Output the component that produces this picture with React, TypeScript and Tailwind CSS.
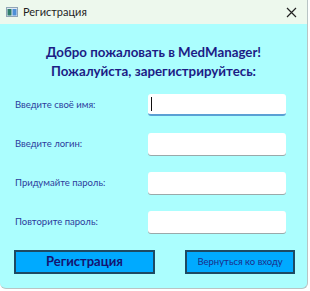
const fields = ["Введите своё имя:", "Введите логин:", "Придумайте пароль:", "Повторите пароль:"]

const App = () => {
  return (
    <div className="h-[291px] w-[310px] bg-white font-['Lato','Noto_Sans',sans-serif]">
      <div className="flex h-[289px] w-[308px] flex-col overflow-hidden rounded-b-md border-r border-b border-[#b9c4c4] bg-[#abfefe]">
        <div className="flex h-[24px] shrink-0 items-center bg-[#edf8ed] pl-[6px] pr-[8px]">
          <svg width="12" height="10" viewBox="0 0 12 10" className="mr-[5px]">
            <rect x="0.5" y="0.5" width="11" height="9" fill="#dfe9f2" stroke="#8fa4b5" />
            <rect x="1.5" y="2" width="4" height="6.5" fill="#2f7d6b" />
            <rect x="6.5" y="2" width="4" height="6.5" fill="#4f8fd6" />
          </svg>
          <span className="text-[11px] text-[#1f1f1f]">Регистрация</span>
          <svg width="11" height="11" viewBox="0 0 11 11" className="ml-auto mr-[2px]">
            <path d="M1 1 L10 10 M10 1 L1 10" stroke="#222" strokeWidth="1.2" />
          </svg>
        </div>
        <div className="mt-[19px] text-center text-[13.3px] font-bold leading-[19px] text-[#1c1c85]">
          <div>Добро пожаловать в MedManager!</div>
          <div>Пожалуйста, зарегистрируйтесь:</div>
        </div>
        <div className="mt-[13px] flex flex-col gap-[17px] pl-[15px]">
          {fields.map((f, i) => (
            <div key={f} className="flex h-[22px] items-center">
              <span className="w-[133px] text-[9.5px] text-[#2b3c9c]">{f}</span>
              <div
                className={
                  "flex h-[22px] w-[138px] items-center rounded-[3px] bg-white pl-[3px] " +
                  (i === 0 ? "border-b-2 border-[#5aa0d4]" : "shadow-[0_1px_0_#9aa9aa]")
                }
              >
                {i === 0 && <div className="h-[14px] w-px bg-[#111]" />}
              </div>
            </div>
          ))}
        </div>
        <div className="mt-[17px] flex items-center pl-[14px]">
          <button className="h-[24px] w-[141px] border-2 border-[#1d4a63] bg-[#00aaff] text-[13px] font-bold text-[#141470]">
            Регистрация
          </button>
          <button className="ml-[30px] h-[24px] w-[110px] border-2 border-[#1d4a63] bg-[#00aaff] text-[9.5px] text-[#1b2d8a]">
            Вернуться ко входу
          </button>
        </div>
      </div>
    </div>
  )
}

export default App
